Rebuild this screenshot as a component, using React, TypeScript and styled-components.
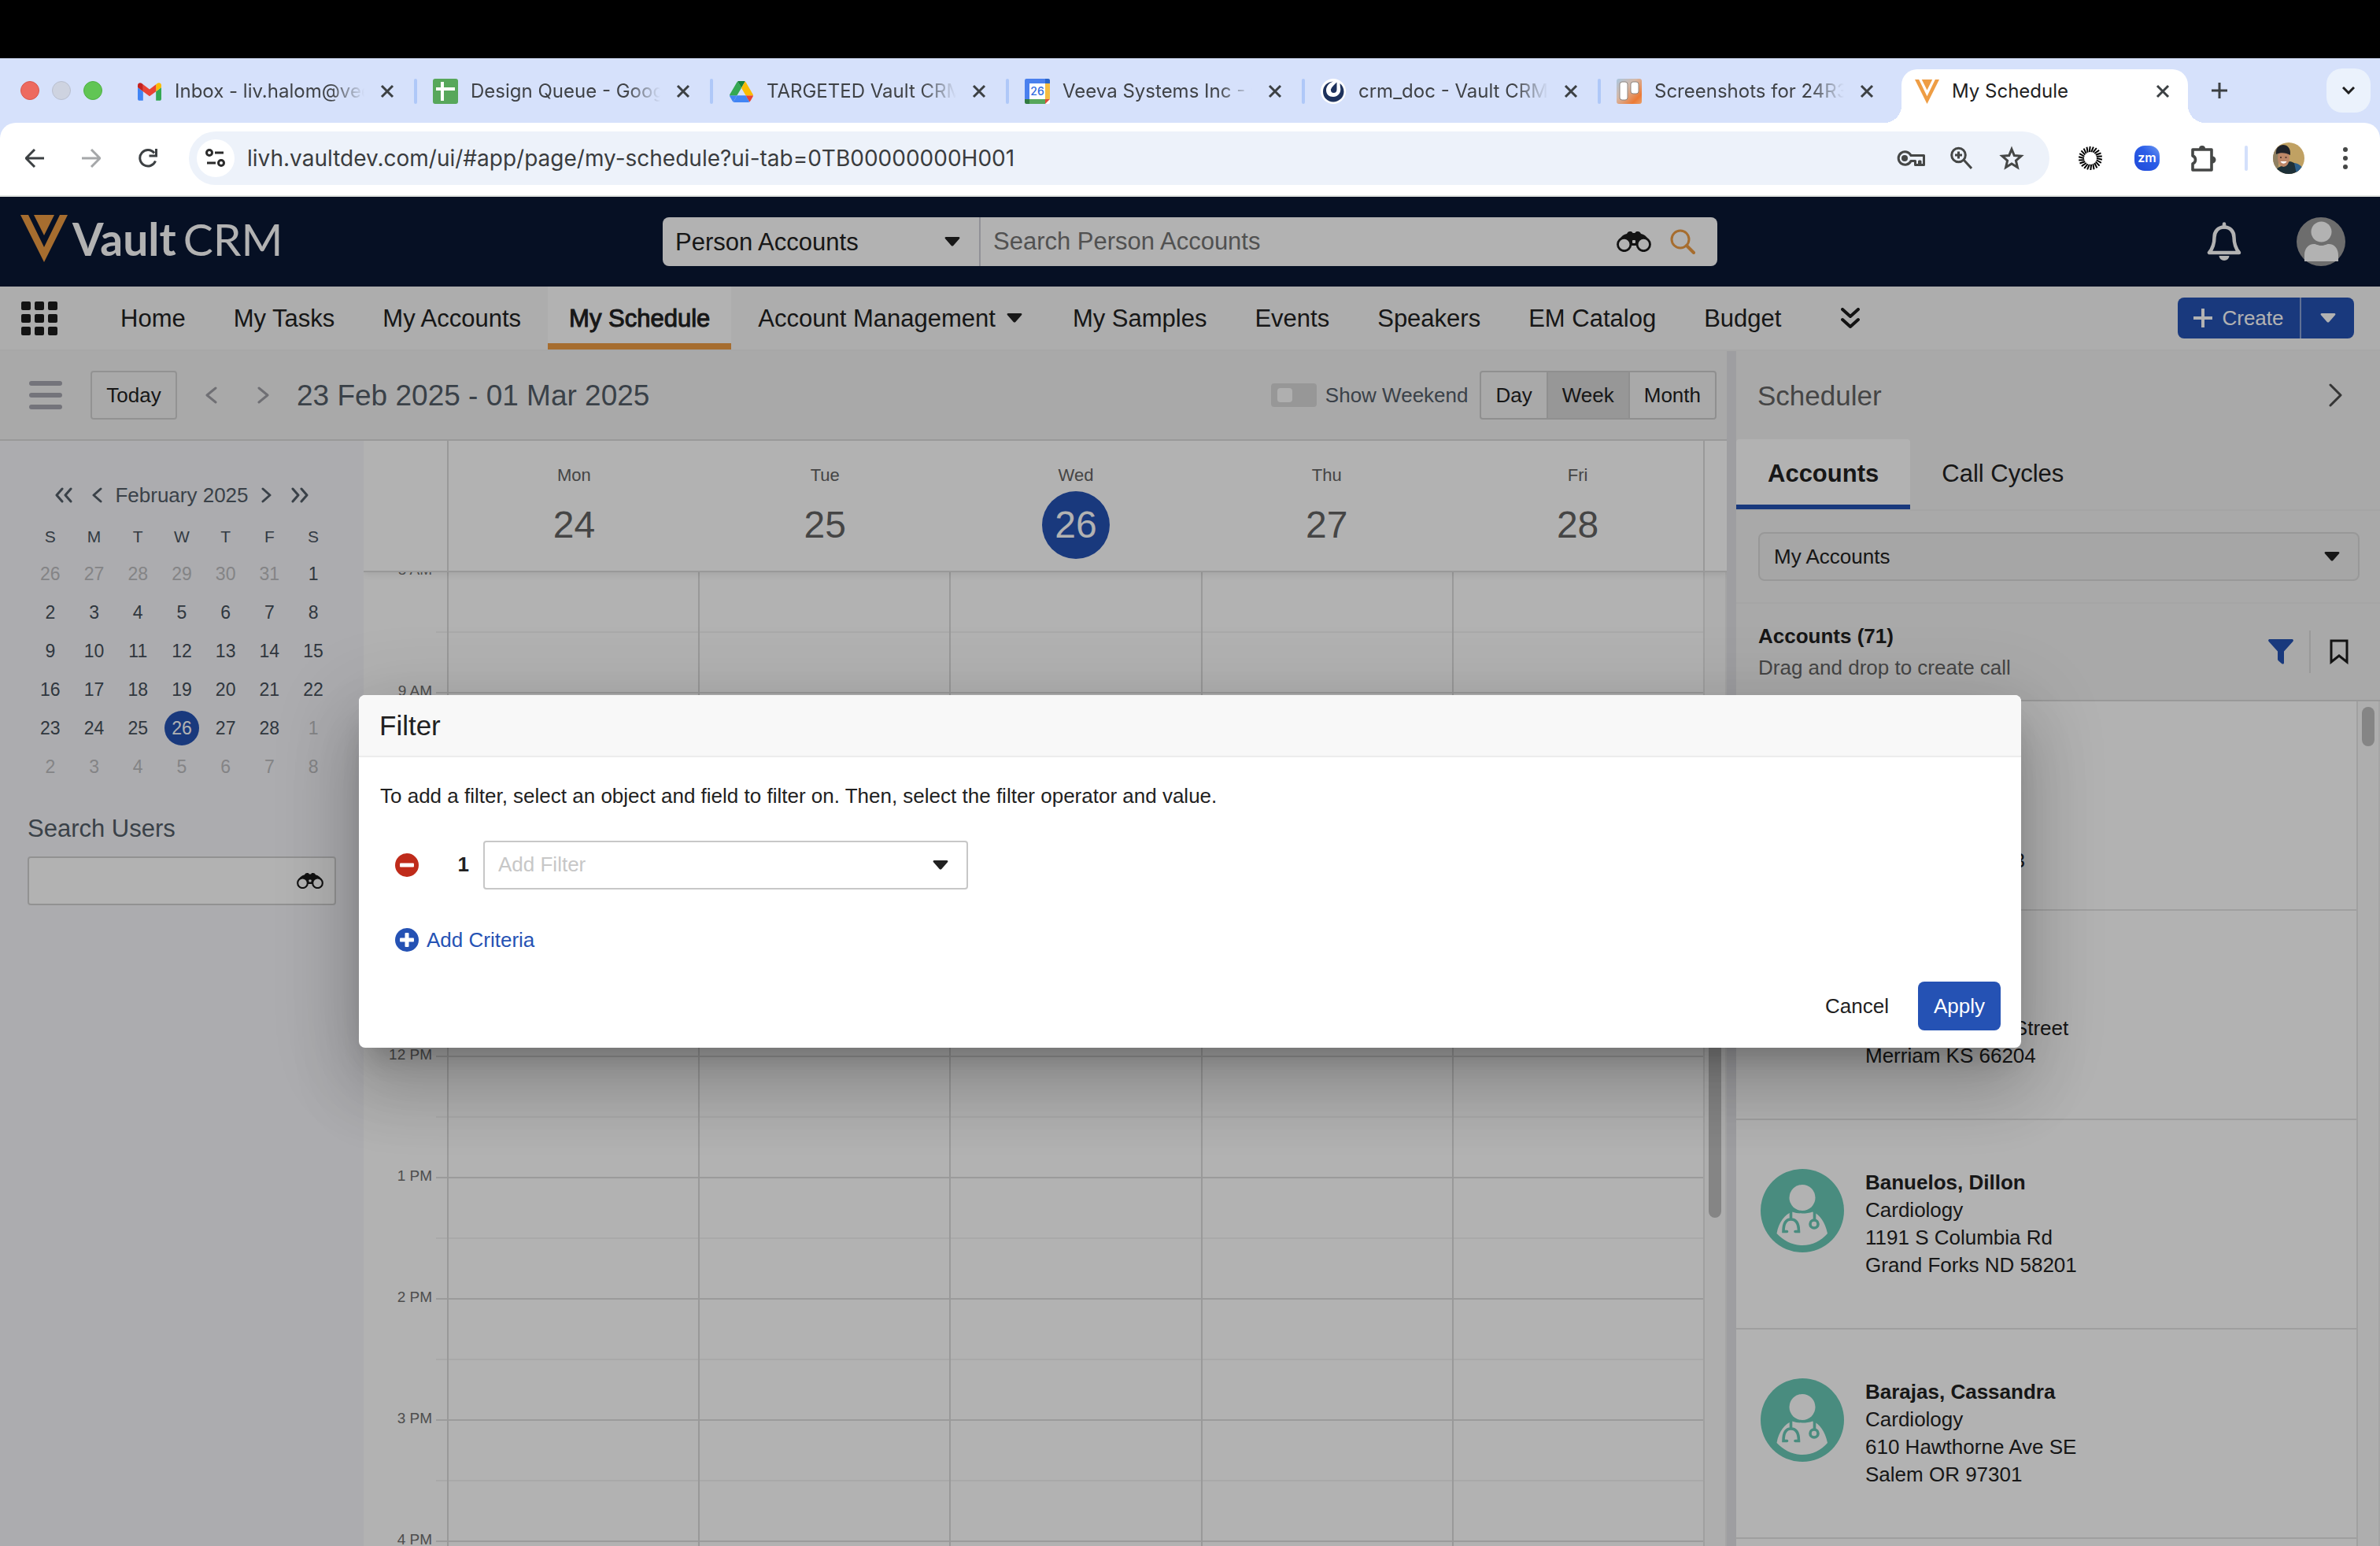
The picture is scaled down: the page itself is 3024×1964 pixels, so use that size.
import React from 'react';
import styled, { createGlobalStyle, css } from 'styled-components';

const GlobalStyle = createGlobalStyle`
  *, *::before, *::after { box-sizing: border-box; }
  body {
    margin: 0;
    background: #000;
    color: #212121;
    font-family: "Liberation Sans", Arial, sans-serif;
    font-size: 26px;
    line-height: 35px;
  }
  button, input, select {
    margin: 0;
    padding: 0;
    border: 0;
    background: none;
    color: inherit;
    font: inherit;
  }
  button { display: inline-flex; align-items: center; justify-content: center; }
  svg { display: block; flex: none; }
  ul { list-style: none; margin: 0; padding: 0; }
  h1, h2, h3, p { margin: 0; font-size: inherit; font-weight: 400; }
  a { color: inherit; text-decoration: none; }
`;

const line = '#dcdcdc';
const softLine = '#f3f3f3';
const blue = '#2552b4';

/* ---------- icons ---------- */

const Caret = ({ color = '#212121' }: { color?: string }) => (
  <svg width="20" height="12" viewBox="0 0 20 12" fill={color}>
    <path d="M2 0h16c1.4 0 1.900 1.200 1 2.200l-7.700 8.800c-.7.800-1.900.800-2.600 0L1 2.200C.1 1.200.6 0 2 0z" />
  </svg>
);

type ChevronProps = { w: number; h: number; color: string; stroke?: number; left?: boolean; twice?: boolean };
const Chevron = ({ w, h, color, stroke = 3, left, twice }: ChevronProps) => {
  const arm = twice ? w / 2 : w;
  const points = (o: number) =>
    left
      ? `${o + arm - 2},2 ${o + 2},${h / 2} ${o + arm - 2},${h - 2}`
      : `${o + 2},2 ${o + arm - 2},${h / 2} ${o + 2},${h - 2}`;
  return (
    <svg width={w} height={h} fill="none" stroke={color} strokeWidth={stroke} strokeLinecap="round" strokeLinejoin="round">
      <polyline points={points(0)} />
      {twice && <polyline points={points(w / 2)} />}
    </svg>
  );
};

const Binoculars = ({ width = 44 }: { width?: number }) => (
  <svg width={width} height={(width * 26) / 44} viewBox="0 0 44 26">
    <path
      fill="#1c1c1c"
      d="M1 14C4 8 8 4 13 3c1-2 2-3 4-3 2 0 3 .5 3.500 2h3C24 .5 25 0 27 0c2 0 3 1 4 3 5 1 9 5 12 11l-9 3-8 1h-8l-8-1z"
    />
    <circle cx="9.700" cy="16.500" r="8.200" fill="#fff" stroke="#1c1c1c" strokeWidth="2.800" />
    <circle cx="34.300" cy="16.500" r="8.200" fill="#fff" stroke="#1c1c1c" strokeWidth="2.800" />
    <rect x="20" y="11" width="4" height="4" rx="1" fill="#fff" />
  </svg>
);

const CloseIcon = () => (
  <svg width="18" height="18" stroke="#3c4043" strokeWidth="3" fill="none">
    <path d="M2 2l14 14M16 2L2 16" />
  </svg>
);

const VeevaMark = ({ width, height }: { width: number; height: number }) => (
  <svg width={width} height={height} viewBox="0 0 60 60" preserveAspectRatio="none" fill="#ee9d44">
    <path d="M0 0h10l20 41L50 0h10L30 60z" />
    <path d="M17 0h26L30 26z" />
  </svg>
);

const GmailIcon = () => (
  <svg width="30" height="23" viewBox="52 42 88 66">
    <path fill="#4285f4" d="M58 108h14V74L52 59v43c0 3.320 2.690 6 6 6" />
    <path fill="#34a853" d="M120 108h14c3.320 0 6-2.690 6-6V59l-20 15" />
    <path fill="#fbbc04" d="M120 48v26l20-15v-8c0-7.420-8.470-11.650-14.400-7.200" />
    <path fill="#ea4335" d="M72 74V48l24 18 24-18v26L96 92" />
    <path fill="#c5221f" d="M52 51v8l20 15V48l-5.600-4.200c-5.940-4.450-14.400-.22-14.400 7.200" />
  </svg>
);

const SheetsIcon = () => (
  <svg width="32" height="32">
    <rect width="32" height="32" rx="3" fill="#57a75b" />
    <path d="M12 4v24M4 13h24" stroke="#fff" strokeWidth="4" />
  </svg>
);

const DriveIcon = () => (
  <svg width="30" height="27" viewBox="0 0 87.3 78">
    <path fill="#4285f4" d="m6.600 66.850 3.850 6.650c.8 1.400 1.950 2.500 3.300 3.300l13.750-23.800h-27.500c0 1.550.4 3.100 1.200 4.500z" />
    <path fill="#34a853" d="m43.650 25-13.750-23.800c-1.350.8-2.500 1.900-3.300 3.300l-25.400 44a9.060 9.060 0 0 0 -1.200 4.500h27.500z" />
    <path fill="#ea4335" d="m73.550 76.800c1.350-.8 2.500-1.900 3.300-3.300l1.600-2.750 7.650-13.250c.8-1.400 1.200-2.950 1.200-4.500h-27.502l5.852 11.500z" />
    <path fill="#188038" d="m43.650 25 13.750-23.800c-1.350-.8-2.900-1.200-4.500-1.200h-18.500c-1.600 0-3.150.45-4.500 1.200z" />
    <path fill="#4285f4" d="m59.800 53h-32.300l-13.750 23.800c1.350.8 2.900 1.200 4.500 1.200h50.800c1.600 0 3.150-.45 4.500-1.200z" />
    <path fill="#fbbc04" d="m73.400 26.500-12.700-22c-.8-1.400-1.950-2.500-3.300-3.300l-13.750 23.800 16.150 28h27.450c0-1.550-.4-3.100-1.200-4.500z" />
  </svg>
);

const CalendarIcon = () => (
  <svg width="32" height="32">
    <rect width="32" height="32" rx="2" fill="#fff" />
    <path fill="#4a80ee" d="M2 0h24v6H6v20H0V2a2 2 0 0 1 2-2z" />
    <path fill="#2a66ca" d="M26 0h4a2 2 0 0 1 2 2v4h-6z" />
    <path fill="#f5bd42" d="M26 6h6v20h-6z" />
    <path fill="#57a75b" d="M6 26h20v6H6z" />
    <path fill="#317b41" d="M0 26h6v6H2a2 2 0 0 1-2-2z" />
    <path fill="#e04a3c" d="M26 26h6l-6 6z" />
    <text x="16" y="21" textAnchor="middle" fontSize="14" fontWeight="500" fontFamily="Inter, sans-serif" fill="#2f6be0">26</text>
  </svg>
);

const MattermostIcon = () => (
  <svg width="32" height="32">
    <circle cx="16" cy="16" r="16" fill="#fff" />
    <path d="M16 3.500C8 4 3 9.500 3 16.500 3 24 9 29.500 16 29.500S29.500 24 29.500 16.500c0-4.500-2-8-5-10.500l.5 5c1.500 6-2.500 12-9 12-5.500 0-9-3.500-9-8.500S11 5 16 3.500z" fill="#1e325c" />
    <path d="M20.500 4.500v9c0 3-1.500 4.500-4 4.500s-4-2-3.500-4.500c.5-2 4-6 7.500-9z" fill="#1e325c" />
  </svg>
);

const TrelloIcon = () => (
  <svg width="32" height="32">
    <defs>
      <linearGradient id="trello" x1="0" y1="0" x2="1" y2="1">
        <stop offset="0" stopColor="#a9c6e0" />
        <stop offset="0.4" stopColor="#d5b9a8" />
        <stop offset="0.8" stopColor="#ec7a36" />
        <stop offset="1" stopColor="#e9a06a" />
      </linearGradient>
    </defs>
    <rect width="32" height="32" rx="3" fill="url(#trello)" />
    <rect x="4" y="4" width="10" height="23" rx="3" fill="#fff" stroke="#8d8580" strokeWidth="1" />
    <rect x="18" y="4" width="10" height="15" rx="3" fill="#fff" stroke="#8d8580" strokeWidth="1" />
  </svg>
);

const BackArrow = ({ color, flip }: { color: string; flip?: boolean }) => (
  <svg width="24" height="24" stroke={color} strokeWidth="3" fill="none">
    {flip ? <path d="M0 12h22M12 1l11 11-11 11" /> : <path d="M24 12H2M12 1L1 12l11 11" />}
  </svg>
);

const ReloadIcon = () => (
  <svg width="24" height="24" fill="none" stroke="#3c4043" strokeWidth="3">
    <path d="M21.500 15.500A10.200 10.200 0 1 1 20 5.500" />
    <path d="M22.500 0v9h-9" />
  </svg>
);

const SiteInfoIcon = () => (
  <svg width="26" height="24" fill="none" stroke="#2b2b2b" strokeWidth="3">
    <circle cx="5" cy="5" r="3.500" />
    <path d="M12 5h11M2 18h11" />
    <circle cx="20" cy="18" r="3.500" />
  </svg>
);

const KeyIcon = () => (
  <svg width="36" height="22" fill="none" stroke="#454746" strokeWidth="3">
    <path d="M18 7.500A8.300 8.300 0 1 0 18 14.500H23.500v5h5v-4.500h1.500v4.500h4.500V7.500z" strokeLinejoin="round" />
    <circle cx="10" cy="11" r="4" fill="#454746" stroke="none" />
  </svg>
);

const ZoomIcon = () => (
  <svg width="28" height="30" fill="none" stroke="#454746" strokeWidth="3">
    <circle cx="10.500" cy="11" r="8.800" />
    <path d="M17 17l10 11M10.500 6.500v9M6 11h9" />
  </svg>
);

const StarIcon = () => (
  <svg width="32" height="32" fill="none" stroke="#454746" strokeWidth="3">
    <path d="M16 4.500l3.300 8.100 8.700.7-6.600 5.700 2 8.500L16 23l-7.400 4.500 2-8.500L4 13.300l8.700-.7z" />
  </svg>
);

const BurstIcon = () => (
  <svg width="32" height="32" viewBox="-16 -16 32 32" stroke="#000" strokeWidth="2">
    {Array.from({ length: 22 }, (_, i) => {
      const a = (i * Math.PI * 2) / 22;
      return <line key={i} x1={8 * Math.cos(a)} y1={8 * Math.sin(a)} x2={15 * Math.cos(a + 0.12)} y2={15 * Math.sin(a + 0.12)} />;
    })}
  </svg>
);

const ZoomMeetingIcon = () => (
  <svg width="32" height="32">
    <defs>
      <linearGradient id="zm" x1="1" y1="0" x2="0" y2="1">
        <stop offset="0" stopColor="#6f9af2" />
        <stop offset="0.4" stopColor="#2b5ee8" />
        <stop offset="1" stopColor="#2048d8" />
      </linearGradient>
    </defs>
    <rect width="32" height="32" rx="13" fill="url(#zm)" />
    <text x="16" y="21" textAnchor="middle" fontSize="16" fontWeight="600" fontFamily="Inter, sans-serif" fill="#fff">zm</text>
  </svg>
);

const PuzzleIcon = () => (
  <svg width="34" height="34" fill="none" stroke="#454746" strokeWidth="3.600" strokeLinejoin="round">
    <path d="M3 6h24v26H3v-8c2.500-1 3.500-3 3.500-5s-1-4-3.500-5z" />
    <path d="M11 5a4 4 0 0 1 8 0zM28 14.500a4.500 4.500 0 0 1 0 9z" fill="#454746" stroke="none" />
  </svg>
);

const PhotoAvatar = () => (
  <svg width="40" height="40">
    <defs>
      <clipPath id="face"><circle cx="20" cy="20" r="20" /></clipPath>
    </defs>
    <g clipPath="url(#face)">
      <rect width="40" height="40" fill="#c0a163" />
      <path d="M0 0h7v40H0z" fill="#8f8062" />
      <path d="M2 40c1-6 5-9 9-10l10-6c7 1 12 6 13 16z" fill="#1d3038" />
      <path d="M27 26c7 1 11 5 13 12l-10 2z" fill="#2c5f8a" />
      <ellipse cx="13.500" cy="20" rx="7.500" ry="11" fill="#bd8768" />
      <path d="M4 15C3 7 8 3 13 3s10 4 9 13c-5-3-12-4-18-1z" fill="#1f2229" />
      <path d="M9.500 24c2 3.500 6 3.500 8 0z" fill="#fff" />
      <path d="M9 19h2M15.500 19h2" stroke="#3d2a22" strokeWidth="1.500" />
    </g>
  </svg>
);

const BellIcon = () => (
  <svg width="44" height="50" fill="none" stroke="#fff" strokeWidth="4.500" strokeLinejoin="round">
    <path d="M22 6.500c-8 0-12.500 6-12.500 13 0 9-2 14-6.500 19.500h38c-4.500-5.500-6.500-10.500-6.500-19.500 0-7-4.500-13-12.500-13z" />
    <path d="M22 2.500v4" strokeLinecap="round" />
    <path d="M15.500 43h13a6.500 6 0 0 1-13 0z" fill="#fff" stroke="none" />
  </svg>
);

const UserIcon = () => (
  <svg width="62" height="62">
    <circle cx="31" cy="31" r="31" fill="#9d9d9d" />
    <circle cx="31.500" cy="18.500" r="13" fill="#fff" />
    <path d="M10 56V48c0-8 5-14 12-14 3 0 5 2 9.500 2s6.500-2 9.500-2c7 0 12 6 12 14v8z" fill="#fff" />
  </svg>
);

const DoctorIcon = () => (
  <svg width="106" height="106" fill="none">
    <circle cx="53" cy="53" r="53" fill="#69c9b6" />
    <circle cx="53" cy="36.500" r="16.500" fill="#fff" />
    <path d="M40 54.500c4 1.500 8 2 13 2s9-.5 13-2c9 3 16 13 19 27.500-8 9-19 15-32 15s-24-6-32.500-15C23 67.500 31 57.500 40 54.500z" fill="#fff" />
    <g stroke="#69c9b6" strokeWidth="3.600" strokeLinecap="round">
      <path d="M38.500 54v10M33.500 79.500h-4.500c0-9 2.500-15.500 9.500-15.500s10 6.500 10 15.500H44" />
      <path d="M68.500 54v10" />
      <circle cx="68" cy="70" r="5" />
    </g>
  </svg>
);

const FunnelIcon = () => (
  <svg width="32" height="32" fill={blue}>
    <path d="M2 0h28c1.800 0 2.500 1.600 1.300 3L20 15.500V30c0 1.500-1.500 2-2.600 1.200l-4.400-3.700c-.7-.6-1-1.200-1-2V15.500L.7 3C-.5 1.600.2 0 2 0z" />
  </svg>
);

const BookmarkIcon = () => (
  <svg width="24" height="32" fill="none" stroke="#1c1c1c" strokeWidth="3">
    <path d="M2 2h20v27l-10-8-10 8z" strokeLinejoin="miter" />
  </svg>
);

const RoundSign = ({ color, plus }: { color: string; plus?: boolean }) => (
  <svg width="30" height="30">
    <circle cx="15" cy="15" r="15" fill={color} />
    <rect x="6" y="12.500" width="18" height="5" rx="1" fill="#fff" />
    {plus && <rect x="12.500" y="6" width="5" height="18" rx="1" fill="#fff" />}
  </svg>
);

const PlusIcon = ({ color, size, stroke }: { color: string; size: number; stroke: number }) => (
  <svg width={size} height={size} stroke={color} strokeWidth={stroke}>
    <path d={`M${size / 2} 0v${size}M0 ${size / 2}h${size}`} />
  </svg>
);

/* ---------- browser frame ---------- */

const Screen = styled.div`
  display: flex;
  flex-direction: column;
  height: 100vh;
  overflow: hidden;
`;

const MenuBar = styled.div`
  flex: none;
  height: 74px;
  background: #000;
`;

const TabStrip = styled.div`
  flex: none;
  display: flex;
  align-items: flex-end;
  height: 82px;
  padding-right: 12px;
  background: #d6e1fb;
  font: 24px/32px Inter, sans-serif;
  color: #3f4246;
`;

const Lights = styled.div`
  display: flex;
  align-items: center;
  gap: 16px;
  width: 152px;
  height: 82px;
  padding-left: 26px;
`;

const Light = styled.span<{ $fill: string; $edge: string }>`
  width: 24px;
  height: 24px;
  border-radius: 50%;
  border: 1px solid ${p => p.$edge};
  background: ${p => p.$fill};
`;

const Tab = styled.div<{ $active?: boolean; $divided?: boolean }>`
  position: relative;
  display: flex;
  align-items: center;
  gap: 16px;
  width: 376px;
  height: 82px;
  padding: 2px 23px 0 22px;
  ${p => p.$divided && css`
    &::after {
      content: '';
      position: absolute;
      right: -2px;
      width: 4px;
      height: 32px;
      border-radius: 2px;
      background: #afc8f8;
    }
  `}
  ${p => p.$active && css`
    width: 364px;
    height: 68px;
    margin-left: 8px;
    padding: 0 19px 12px 16px;
    border-radius: 20px 20px 0 0;
    background: #fff;
    color: #1f1f1f;
    &::before, &::after {
      content: '';
      position: absolute;
      bottom: 0;
      width: 22px;
      height: 22px;
    }
    &::before {
      right: 100%;
      background: radial-gradient(circle at 0 0, transparent 22px, #fff 22px);
    }
    &::after {
      left: 100%;
      background: radial-gradient(circle at 100% 0, transparent 22px, #fff 22px);
    }
  `}
`;

const TabIcon = styled.span`
  display: flex;
  justify-content: center;
  width: 32px;
`;

const TabTitle = styled.span<{ $fade?: boolean }>`
  flex: 1;
  overflow: hidden;
  white-space: nowrap;
  ${p => p.$fade && css`
    mask-image: linear-gradient(90deg, #000 82%, transparent);
  `}
`;

const TabClose = styled.button`
  width: 26px;
  height: 32px;
`;

const NewTab = styled.button`
  width: 40px;
  height: 82px;
  margin-left: 20px;
`;

const TabSearch = styled.button`
  align-self: center;
  width: 56px;
  height: 56px;
  margin-left: auto;
  border-radius: 20px;
  background: #ebf2fc;
`;

const AddressRow = styled.div`
  flex: none;
  background: #d6e1fb;
`;

const AddressBar = styled.div`
  display: flex;
  align-items: center;
  height: 94px;
  padding: 0 8px 2px 20px;
  border-radius: 20px 20px 0 0;
  border-bottom: 2px solid #e1e5e1;
  background: #fff;
`;

const BrowserButton = styled.button<{ $w?: number }>`
  width: ${p => p.$w ?? 72}px;
  height: 48px;
`;

const Omnibox = styled.div`
  flex: 1;
  display: flex;
  align-items: center;
  height: 68px;
  margin-left: 4px;
  padding: 0 16px 0 10px;
  border-radius: 34px;
  background: #edf2fa;
`;

const SiteInfo = styled.button`
  width: 48px;
  height: 48px;
  border-radius: 50%;
  background: #fff;
`;

const UrlInput = styled.input`
  flex: 1;
  padding-left: 16px;
  font: 28px/36px Inter, sans-serif;
  color: #3a3c3e;
`;

const BarRule = styled.span`
  width: 4px;
  height: 32px;
  margin: 0 16px;
  border-radius: 2px;
  background: #d3e0fb;
`;

/* ---------- application header ---------- */

const Application = styled.div`
  position: relative;
  flex: 1;
  min-height: 0;
  display: flex;
  flex-direction: column;
  background: #fff;
`;

const AppHeader = styled.header`
  flex: none;
  display: grid;
  grid-template-columns: 1fr 1340px 1fr;
  align-items: center;
  height: 114px;
  background: #0a1734;
`;

const Brand = styled.a`
  display: flex;
  align-items: center;
  gap: 6px;
  padding: 0 0 8px 26px;
  color: #fff;
  font: 700 57px/60px Lato, sans-serif;
`;

const BrandLight = styled.span`
  margin-left: 9px;
  font-weight: 400;
`;

const GlobalSearch = styled.div`
  display: flex;
  align-items: center;
  height: 62px;
  border-radius: 8px;
  overflow: hidden;
  background: #fff;
  font-size: 31px;
`;

const SelectWrap = styled.div<{ $right: number }>`
  position: relative;
  > svg {
    position: absolute;
    top: 50%;
    right: ${p => p.$right}px;
    margin-top: -6px;
    pointer-events: none;
  }
`;

const ObjectSelect = styled.select`
  appearance: none;
  width: 404px;
  height: 62px;
  padding-left: 16px;
  border-right: 2px solid #d0d0d8;
`;

const SearchInput = styled.input`
  flex: 1;
  min-width: 0;
  height: 62px;
  padding-left: 16px;
  &::placeholder { color: #757575; opacity: 1; }
`;

const SearchButton = styled.button`
  height: 62px;
  padding: 0 12px;
  &:last-child { padding: 0 28px 0 12px; }
`;

const HeaderActions = styled.div`
  display: flex;
  align-items: center;
  justify-content: flex-end;
  gap: 70px;
  padding-right: 44px;
`;

const MainNav = styled.nav`
  flex: none;
  display: flex;
  align-items: center;
  gap: 7px;
  height: 82px;
  padding: 0 33px 0 27px;
  border-bottom: 2px solid #efefef;
  background: #f8f8f8;
  font-size: 31px;
`;

const AppGrid = styled.button`
  display: grid;
  grid-template-columns: repeat(3, 12px);
  gap: 5px;
  margin-right: 46px;
`;

const GridDot = styled.span`
  height: 11px;
  border-radius: 2px;
  background: #1c1c1c;
`;

const NavLink = styled.a<{ $active?: boolean; $menu?: boolean }>`
  display: flex;
  align-items: center;
  gap: 14px;
  height: 80px;
  padding: 0 ${p => (p.$menu ? 30 : 27)}px 0 27px;
  ${p => p.$active && css`
    -webkit-text-stroke: 1px currentColor;
    background: #fff;
    box-shadow: inset 0 -8px #ee9d44;
  `}
`;

const MoreButton = styled.button`
  width: 24px;
  height: 28px;
  margin-left: 42px;
  svg { transform: rotate(90deg); }
`;

const CreateGroup = styled.div`
  display: flex;
  height: 52px;
  margin-left: auto;
  border-radius: 8px;
  overflow: hidden;
  background: ${blue};
  color: #fff;
  font-size: 26px;
`;

const CreateButton = styled.button`
  gap: 12px;
  width: 157px;
  border-right: 2px solid #8aa3d6;
`;

const CreateMenu = styled.button`
  width: 67px;
`;

/* ---------- calendar ---------- */

const Workspace = styled.div`
  flex: 1;
  min-height: 0;
  display: flex;
`;

const CalendarPane = styled.section`
  flex: 1;
  min-width: 0;
  display: flex;
  flex-direction: column;
`;

const CalendarBar = styled.div`
  flex: none;
  display: flex;
  align-items: center;
  height: 114px;
  padding: 0 13px 0 37px;
  border-bottom: 2px solid ${line};
  background: #f3f3f3;
`;

const MenuButton = styled.button`
  flex-direction: column;
  gap: 9px;
  width: 42px;
`;

const MenuLine = styled.span`
  width: 42px;
  height: 6px;
  border-radius: 3px;
  background: #a7a7b1;
`;

const TodayButton = styled.button`
  width: 110px;
  height: 62px;
  margin: 0 30px 0 36px;
  border: 2px solid #d2d2d2;
  border-radius: 4px;
  color: #212121;
`;

const StepButton = styled.button`
  width: 26px;
  height: 48px;
  & + & { margin-left: 40px; }
`;

const RangeTitle = styled.h1`
  margin-left: 30px;
  font-size: 37px;
  color: #535d68;
`;

const WeekendToggle = styled.label`
  display: flex;
  align-items: center;
  gap: 11px;
  margin: 0 15px 0 auto;
  color: #535d68;
`;

const ToggleBox = styled.input`
  appearance: none;
  display: flex;
  align-items: center;
  width: 58px;
  height: 30px;
  padding-left: 8px;
  border-radius: 4px;
  background: #d8d8d8;
  &::before {
    content: '';
    width: 19px;
    height: 18px;
    border-radius: 4px;
    background: #fbfbfb;
  }
`;

const ViewSwitch = styled.div`
  display: flex;
  height: 62px;
  border: 2px solid #cdcdcd;
  border-radius: 4px;
`;

const ViewButton = styled.button<{ $on?: boolean }>`
  padding: 0 18px;
  background: ${p => (p.$on ? '#d8d8d8' : 'transparent')};
  & + & { border-left: 2px solid #cdcdcd; }
`;

const CalendarBody = styled.div`
  flex: 1;
  min-height: 0;
  display: flex;
`;

const Side = styled.aside`
  flex: none;
  width: 462px;
  padding: 50px 35px 0;
  background: #f6f7fb;
  color: #4a545f;
`;

const MonthNav = styled.div`
  display: flex;
  align-items: center;
  justify-content: center;
  gap: 16px;
  height: 38px;
  color: #535d68;
`;

const MonthStep = styled.button<{ $outer?: boolean }>`
  width: ${p => (p.$outer ? 38 : 14)}px;
  height: 38px;
`;

const MonthTable = styled.table`
  width: 390px;
  margin-top: 12px;
  margin-left: 1px;
  border-collapse: collapse;
  table-layout: fixed;
  text-align: center;
  font-size: 23px;
  line-height: 44px;
  th, td { padding: 0; height: 49px; }
  th { height: 44px; font-size: 21px; line-height: 42px; font-weight: 400; }
`;

const DayCell = styled.td<{ $muted?: boolean }>`
  color: ${p => (p.$muted ? '#bdbdc0' : '#454f5a')};
`;

const TodayDot = styled.span`
  display: inline-block;
  width: 44px;
  height: 44px;
  border-radius: 50%;
  background: ${blue};
  color: #fff;
`;

const UsersLabel = styled.label`
  display: block;
  margin-top: 37px;
  font-size: 31px;
  color: #535d68;
`;

const UsersBox = styled.div`
  display: flex;
  align-items: center;
  height: 62px;
  margin-top: 18px;
  padding-right: 14px;
  border: 2px solid #d2d2d2;
  border-radius: 4px;
  background: #fff;
`;

const UsersInput = styled.input`
  flex: 1;
  min-width: 0;
  height: 56px;
  padding-left: 14px;
`;

const Week = styled.div`
  flex: 1;
  min-width: 0;
  display: flex;
  flex-direction: column;
  overflow: hidden;
`;

const WeekHead = styled.div`
  flex: none;
  display: grid;
  grid-template-columns: 106px 1fr 28px;
  height: 167px;
  border-bottom: 2px solid ${line};
  box-shadow: 0 3px 8px rgba(0, 0, 0, 0.08);
  background: #fff;
  z-index: 1;
`;

const WeekDays = styled.div`
  display: grid;
  grid-template-columns: repeat(5, 1fr);
  border-left: 2px solid ${line};
  border-right: 2px solid ${line};
`;

const DayHead = styled.div`
  display: flex;
  flex-direction: column;
  align-items: center;
  padding-top: 32px;
  font-size: 22px;
  line-height: 24px;
  color: #636363;
`;

const DayNumber = styled.span<{ $today?: boolean }>`
  width: 86px;
  height: 86px;
  margin-top: 8px;
  border-radius: 50%;
  text-align: center;
  font-size: 48px;
  line-height: 86px;
  background: ${p => (p.$today ? blue : 'transparent')};
  color: ${p => (p.$today ? '#fff' : '#636363')};
`;

const WeekBody = styled.div`
  flex: 1;
  min-height: 0;
  display: flex;
  overflow: hidden;
`;

const Hours = styled.div`
  flex: 1;
  min-width: 0;
  margin-top: -2px;
`;

const HourRow = styled.div`
  display: grid;
  grid-template-columns: 92px 14px repeat(5, 1fr);
  height: 154px;
`;

const HourLabel = styled.span`
  margin-top: -13px;
  padding-right: 5px;
  text-align: right;
  font-size: 19px;
  line-height: 24px;
  color: #707070;
`;

const Slot = styled.div<{ $cell?: boolean }>`
  display: grid;
  grid-template-rows: 1fr 1fr;
  ${p => p.$cell && css`border-left: 2px solid ${line};`}
  &::before, &::after { content: ''; border-top: 2px solid #dfdfdf; }
  &::after { border-top-color: ${softLine}; }
`;

const ScrollTrack = styled.div<{ $w: number; $top: number }>`
  flex: none;
  width: ${p => p.$w}px;
  padding: ${p => p.$top}px 5px 0;
  border-left: 2px solid #e6e6e6;
  border-right: 2px solid #ececec;
  background: #fafafa;
`;

const ScrollThumb = styled.div<{ $h: number }>`
  height: ${p => p.$h}px;
  border-radius: 8px;
  background: #bfbfbf;
`;

const Splitter = styled.div`
  flex: none;
  width: 12px;
  background: #e2e2e7;
`;

/* ---------- scheduler ---------- */

const Scheduler = styled.section`
  flex: none;
  width: 818px;
  display: flex;
  flex-direction: column;
  background: #f3f3f3;
`;

const SchedulerHead = styled.div`
  display: flex;
  align-items: center;
  justify-content: space-between;
  height: 112px;
  padding: 0 48px 0 27px;
  font-size: 35px;
  color: #636363;
`;

const SchedulerTabs = styled.div`
  display: flex;
  height: 91px;
  border-bottom: 2px solid #ececec;
  font-size: 31px;
`;

const SchedulerTab = styled.button<{ $active?: boolean }>`
  height: 89px;
  padding: 0 40px 2px;
  ${p => p.$active && css`
    border-radius: 4px 4px 0 0;
    background: #fff;
    box-shadow: inset 0 -6px ${blue};
    font-weight: 700;
  `}
`;

const AccountPicker = styled.div`
  padding: 27px 26px 27px 28px;
  border-bottom: 2px solid #ececec;
`;

const AccountSelect = styled.select`
  appearance: none;
  width: 100%;
  height: 62px;
  padding-left: 18px;
  border: 2px solid #dadada;
  border-radius: 8px;
  background: #eee;
`;

const ListHead = styled.div`
  display: flex;
  align-items: center;
  height: 124px;
  padding: 0 40px 0 28px;
  border-bottom: 2px solid ${line};
`;

const ListTitle = styled.h3`
  font-weight: 700;
  line-height: 40px;
`;

const ListHint = styled.p`
  line-height: 40px;
  color: #636363;
`;

const ListActions = styled.div`
  display: flex;
  align-items: center;
  gap: 24px;
  margin-left: auto;
`;

const ListRule = styled.span`
  width: 2px;
  height: 54px;
  margin-left: -4px;
  background: ${line};
`;

const ListBody = styled.div`
  flex: 1;
  min-height: 0;
  display: flex;
  overflow: hidden;
  background: #fff;
`;

const AccountList = styled.ul`
  flex: 1;
`;

const AccountRow = styled.li`
  display: grid;
  grid-template-columns: 106px 1fr;
  column-gap: 27px;
  align-items: center;
  height: 266px;
  padding-left: 31px;
  border-bottom: 2px solid #e4e4e4;
`;

const AccountIcon = styled.span`
  padding-bottom: 34px;
`;

const AccountName = styled.strong`
  display: block;
`;

const AccountLine = styled.span`
  display: block;
`;

/* ---------- filter dialog ---------- */

const Backdrop = styled.div`
  position: absolute;
  inset: 0;
  z-index: 5;
  display: flex;
  align-items: center;
  justify-content: center;
  background: rgba(0, 0, 0, 0.3);
`;

const Dialog = styled.div`
  width: 2112px;
  max-width: 90%;
  border-radius: 8px;
  overflow: hidden;
  background: #fff;
  box-shadow:
    0 24px 33px -15px rgba(0, 0, 0, 0.2),
    0 53px 84px 7px rgba(0, 0, 0, 0.14),
    0 20px 101px 18px rgba(0, 0, 0, 0.12);
`;

const DialogTitle = styled.h2`
  height: 79px;
  padding-left: 26px;
  border-bottom: 2px solid #ececec;
  background: #f8f8f8;
  font-size: 35px;
  line-height: 77px;
`;

const DialogBody = styled.div`
  padding: 32px 27px 0;
`;

const FilterRow = styled.div`
  display: flex;
  align-items: center;
  margin-top: 39px;
  padding-left: 19px;
`;

const RowNumber = styled.label`
  width: 82px;
  padding-right: 18px;
  text-align: right;
  font-weight: 700;
`;

const FieldSelect = styled.select`
  appearance: none;
  width: 616px;
  height: 62px;
  padding-left: 17px;
  border: 2px solid #c7c7c7;
  border-radius: 4px;
  color: #c7c7c7;
`;

const AddButton = styled.button`
  gap: 10px;
  height: 35px;
  margin: 47px 0 0 19px;
  color: ${blue};
`;

const DialogFooter = styled.div`
  display: flex;
  justify-content: flex-end;
  gap: 14px;
  padding: 29px 26px 22px;
`;

const FooterButton = styled.button<{ $primary?: boolean }>`
  height: 62px;
  padding: 0 23px;
  border-radius: 8px;
  ${p => p.$primary && css`
    padding: 0 20px;
    background: ${blue};
    color: #fff;
  `}
`;

/* ---------- data ---------- */

const browserTabs = [
  { title: 'Inbox - liv.halom@veeva.com', icon: <GmailIcon /> },
  { title: 'Design Queue - Google Sheets', icon: <SheetsIcon /> },
  { title: 'TARGETED Vault CRM', icon: <DriveIcon /> },
  { title: 'Veeva Systems Inc - Calendar', icon: <CalendarIcon /> },
  { title: 'crm_doc - Vault CRM Docs', icon: <MattermostIcon /> },
  { title: 'Screenshots for 24R3.2', icon: <TrelloIcon /> },
];

const navItems = [
  'Home', 'My Tasks', 'My Accounts', 'My Schedule', 'Account Management',
  'My Samples', 'Events', 'Speakers', 'EM Catalog', 'Budget',
];

const monthRows = [
  [26, 27, 28, 29, 30, 31, 1],
  [2, 3, 4, 5, 6, 7, 8],
  [9, 10, 11, 12, 13, 14, 15],
  [16, 17, 18, 19, 20, 21, 22],
  [23, 24, 25, 26, 27, 28, 1],
  [2, 3, 4, 5, 6, 7, 8],
];

const isOutside = (row: number, day: number) =>
  (row === 0 && day > 20) || (row === 4 && day === 1) || row === 5;

const weekDays = [
  ['Mon', 24], ['Tue', 25], ['Wed', 26], ['Thu', 27], ['Fri', 28],
] as const;

const hours = ['8 AM', '9 AM', '10 AM', '11 AM', '12 PM', '1 PM', '2 PM', '3 PM', '4 PM'];

const accounts = [
  { name: 'Ackerman, Bo', lines: ['Cardiology', '28 Oak Street', 'Suite 204', 'Chicago IL 60613'] },
  { name: 'Adams, Karen', lines: ['Cardiology', '8800 West 75th Street', 'Merriam KS 66204'] },
  { name: 'Banuelos, Dillon', lines: ['Cardiology', '1191 S Columbia Rd', 'Grand Forks ND 58201'] },
  { name: 'Barajas, Cassandra', lines: ['Cardiology', '610 Hawthorne Ave SE', 'Salem OR 97301'] },
];

/* ---------- page ---------- */

const Browser = () => (
  <>
    <MenuBar />
    <TabStrip>
      <Lights>
        <Light $fill="#ed6a5f" $edge="#d9574c" />
        <Light $fill="#ced3e0" $edge="#b9bfd0" />
        <Light $fill="#61c554" $edge="#4eb142" />
      </Lights>
      {browserTabs.map((tab, i) => (
        <Tab key={tab.title} $divided={i < browserTabs.length - 1}>
          <TabIcon>{tab.icon}</TabIcon>
          <TabTitle $fade>{tab.title}</TabTitle>
          <TabClose aria-label="Close tab"><CloseIcon /></TabClose>
        </Tab>
      ))}
      <Tab $active>
        <TabIcon><VeevaMark width={31} height={31} /></TabIcon>
        <TabTitle>My Schedule</TabTitle>
        <TabClose aria-label="Close tab"><CloseIcon /></TabClose>
      </Tab>
      <NewTab aria-label="New tab"><PlusIcon color="#3c4043" size={20} stroke={3} /></NewTab>
      <TabSearch aria-label="Search tabs">
        <svg width="16" height="10" fill="none" stroke="#1f1f1f" strokeWidth="3"><path d="M1 1l7 7 7-7" /></svg>
      </TabSearch>
    </TabStrip>
    <AddressRow>
      <AddressBar>
        <BrowserButton $w={48} aria-label="Back"><BackArrow color="#3c4043" /></BrowserButton>
        <BrowserButton $w={96} aria-label="Forward"><BackArrow flip color="#a5a7a9" /></BrowserButton>
        <BrowserButton $w={48} aria-label="Reload"><ReloadIcon /></BrowserButton>
        <BrowserButton as="span" $w={24} />
        <Omnibox>
          <SiteInfo aria-label="Site information"><SiteInfoIcon /></SiteInfo>
          <UrlInput aria-label="Address" readOnly value="livh.vaultdev.com/ui/#app/page/my-schedule?ui-tab=0TB00000000H001" />
          <BrowserButton $w={64} aria-label="Passwords"><KeyIcon /></BrowserButton>
          <BrowserButton $w={64} aria-label="Zoom"><ZoomIcon /></BrowserButton>
          <BrowserButton $w={64} aria-label="Bookmark this page"><StarIcon /></BrowserButton>
        </Omnibox>
        <BrowserButton as="span" $w={16} />
        <BrowserButton aria-label="Okta"><BurstIcon /></BrowserButton>
        <BrowserButton aria-label="Zoom meetings"><ZoomMeetingIcon /></BrowserButton>
        <BrowserButton aria-label="Extensions"><PuzzleIcon /></BrowserButton>
        <BarRule />
        <BrowserButton aria-label="Profile"><PhotoAvatar /></BrowserButton>
        <BrowserButton aria-label="Menu">
          <svg width="8" height="30" fill="#454746">
            <circle cx="4" cy="4" r="3" /><circle cx="4" cy="15" r="3" /><circle cx="4" cy="26" r="3" />
          </svg>
        </BrowserButton>
      </AddressBar>
    </AddressRow>
  </>
);

const Header = () => (
  <>
    <AppHeader>
      <Brand href="#">
        <VeevaMark width={60} height={60} />
        <span>Vault<BrandLight>CRM</BrandLight></span>
      </Brand>
      <GlobalSearch>
        <SelectWrap $right={26}>
          <ObjectSelect aria-label="Object to search"><option>Person Accounts</option></ObjectSelect>
          <Caret />
        </SelectWrap>
        <SearchInput aria-label="Search Person Accounts" placeholder="Search Person Accounts" />
        <SearchButton aria-label="Advanced search"><Binoculars /></SearchButton>
        <SearchButton aria-label="Search">
          <svg width="32" height="32" fill="none" stroke="#ee9d44" strokeWidth="3">
            <circle cx="13" cy="13" r="11" /><path d="M21 21l9 9" strokeLinecap="round" strokeWidth="4" />
          </svg>
        </SearchButton>
      </GlobalSearch>
      <HeaderActions>
        <button aria-label="Notifications"><BellIcon /></button>
        <button aria-label="User menu"><UserIcon /></button>
      </HeaderActions>
    </AppHeader>
    <MainNav>
      <AppGrid aria-label="Applications">
        {Array.from({ length: 9 }, (_, i) => <GridDot key={i} />)}
      </AppGrid>
      {navItems.map(item => (
        <NavLink key={item} href="#" $active={item === 'My Schedule'} $menu={item === 'Account Management'}>
          {item}
          {item === 'Account Management' && <Caret />}
        </NavLink>
      ))}
      <MoreButton aria-label="More tabs"><Chevron twice w={26} h={24} color="#1c1c1c" stroke={4} /></MoreButton>
      <CreateGroup>
        <CreateButton><PlusIcon color="#fff" size={24} stroke={4} />Create</CreateButton>
        <CreateMenu aria-label="More create options"><Caret color="#fff" /></CreateMenu>
      </CreateGroup>
    </MainNav>
  </>
);

const SidePanel = () => (
  <Side>
    <MonthNav>
      <MonthStep $outer aria-label="Previous year"><Chevron left twice w={22} h={20} color="#535d68" /></MonthStep>
      <MonthStep aria-label="Previous month"><Chevron left w={13} h={20} color="#535d68" /></MonthStep>
      <span>February 2025</span>
      <MonthStep aria-label="Next month"><Chevron w={13} h={20} color="#535d68" /></MonthStep>
      <MonthStep $outer aria-label="Next year"><Chevron twice w={22} h={20} color="#535d68" /></MonthStep>
    </MonthNav>
    <MonthTable>
      <thead>
        <tr>{['S', 'M', 'T', 'W', 'T', 'F', 'S'].map((d, i) => <th key={i}>{d}</th>)}</tr>
      </thead>
      <tbody>
        {monthRows.map((row, r) => (
          <tr key={r}>
            {row.map(day => (
              <DayCell key={day} $muted={isOutside(r, day)}>
                {r === 4 && day === 26 ? <TodayDot>{day}</TodayDot> : day}
              </DayCell>
            ))}
          </tr>
        ))}
      </tbody>
    </MonthTable>
    <UsersLabel htmlFor="users">Search Users</UsersLabel>
    <UsersBox>
      <UsersInput id="users" />
      <button aria-label="Look up users"><Binoculars width={34} /></button>
    </UsersBox>
  </Side>
);

const WeekView = () => (
  <Week>
    <WeekHead>
      <span />
      <WeekDays>
        {weekDays.map(([name, number]) => (
          <DayHead key={name}>
            {name}
            <DayNumber $today={number === 26}>{number}</DayNumber>
          </DayHead>
        ))}
      </WeekDays>
    </WeekHead>
    <WeekBody>
      <Hours>
        {hours.map(hour => (
          <HourRow key={hour}>
            <HourLabel>{hour}</HourLabel>
            <Slot />
            {weekDays.map(([name]) => <Slot key={name} $cell />)}
          </HourRow>
        ))}
      </Hours>
      <ScrollTrack $w={30} $top={420}><ScrollThumb $h={400} /></ScrollTrack>
    </WeekBody>
  </Week>
);

const SchedulerPanel = () => (
  <Scheduler>
    <SchedulerHead>
      <h2>Scheduler</h2>
      <button aria-label="Collapse scheduler"><Chevron w={17} h={30} color="#4c4c4c" /></button>
    </SchedulerHead>
    <SchedulerTabs role="tablist">
      <SchedulerTab role="tab" aria-selected $active>Accounts</SchedulerTab>
      <SchedulerTab role="tab">Call Cycles</SchedulerTab>
    </SchedulerTabs>
    <AccountPicker>
      <SelectWrap $right={25}>
        <AccountSelect aria-label="Account list"><option>My Accounts</option></AccountSelect>
        <Caret />
      </SelectWrap>
    </AccountPicker>
    <ListHead>
      <div>
        <ListTitle>Accounts (71)</ListTitle>
        <ListHint>Drag and drop to create call</ListHint>
      </div>
      <ListActions>
        <button aria-label="Filter accounts"><FunnelIcon /></button>
        <ListRule />
        <button aria-label="Saved filters"><BookmarkIcon /></button>
      </ListActions>
    </ListHead>
    <ListBody>
      <AccountList>
        {accounts.map(account => (
          <AccountRow key={account.name}>
            <AccountIcon><DoctorIcon /></AccountIcon>
            <div>
              <AccountName>{account.name}</AccountName>
              {account.lines.map(text => <AccountLine key={text}>{text}</AccountLine>)}
            </div>
          </AccountRow>
        ))}
      </AccountList>
      <ScrollTrack $w={30} $top={7}><ScrollThumb $h={50} /></ScrollTrack>
    </ListBody>
  </Scheduler>
);

const FilterDialog = () => (
  <Backdrop>
    <Dialog role="dialog" aria-modal="true" aria-labelledby="filter-title">
      <DialogTitle id="filter-title">Filter</DialogTitle>
      <DialogBody>
        <p>To add a filter, select an object and field to filter on. Then, select the filter operator and value.</p>
        <FilterRow>
          <button aria-label="Remove filter"><RoundSign color="#bf2b1a" /></button>
          <RowNumber htmlFor="criterion">1</RowNumber>
          <SelectWrap $right={25}>
            <FieldSelect id="criterion"><option>Add Filter</option></FieldSelect>
            <Caret />
          </SelectWrap>
        </FilterRow>
        <AddButton><RoundSign plus color={blue} />Add Criteria</AddButton>
      </DialogBody>
      <DialogFooter>
        <FooterButton>Cancel</FooterButton>
        <FooterButton $primary>Apply</FooterButton>
      </DialogFooter>
    </Dialog>
  </Backdrop>
);

export default function App() {
  return (
    <Screen>
      <GlobalStyle />
      <Browser />
      <Application>
        <Header />
        <Workspace>
          <CalendarPane>
            <CalendarBar>
              <MenuButton aria-label="Toggle side panel"><MenuLine /><MenuLine /><MenuLine /></MenuButton>
              <TodayButton>Today</TodayButton>
              <StepButton aria-label="Previous week"><Chevron left w={15} h={22} color="#a0a0a6" /></StepButton>
              <StepButton aria-label="Next week"><Chevron w={15} h={22} color="#a0a0a6" /></StepButton>
              <RangeTitle>23 Feb 2025 - 01 Mar 2025</RangeTitle>
              <WeekendToggle>
                <ToggleBox type="checkbox" />
                Show Weekend
              </WeekendToggle>
              <ViewSwitch>
                <ViewButton>Day</ViewButton>
                <ViewButton $on>Week</ViewButton>
                <ViewButton>Month</ViewButton>
              </ViewSwitch>
            </CalendarBar>
            <CalendarBody>
              <SidePanel />
              <WeekView />
            </CalendarBody>
          </CalendarPane>
          <Splitter />
          <SchedulerPanel />
        </Workspace>
        <FilterDialog />
      </Application>
    </Screen>
  );
}
